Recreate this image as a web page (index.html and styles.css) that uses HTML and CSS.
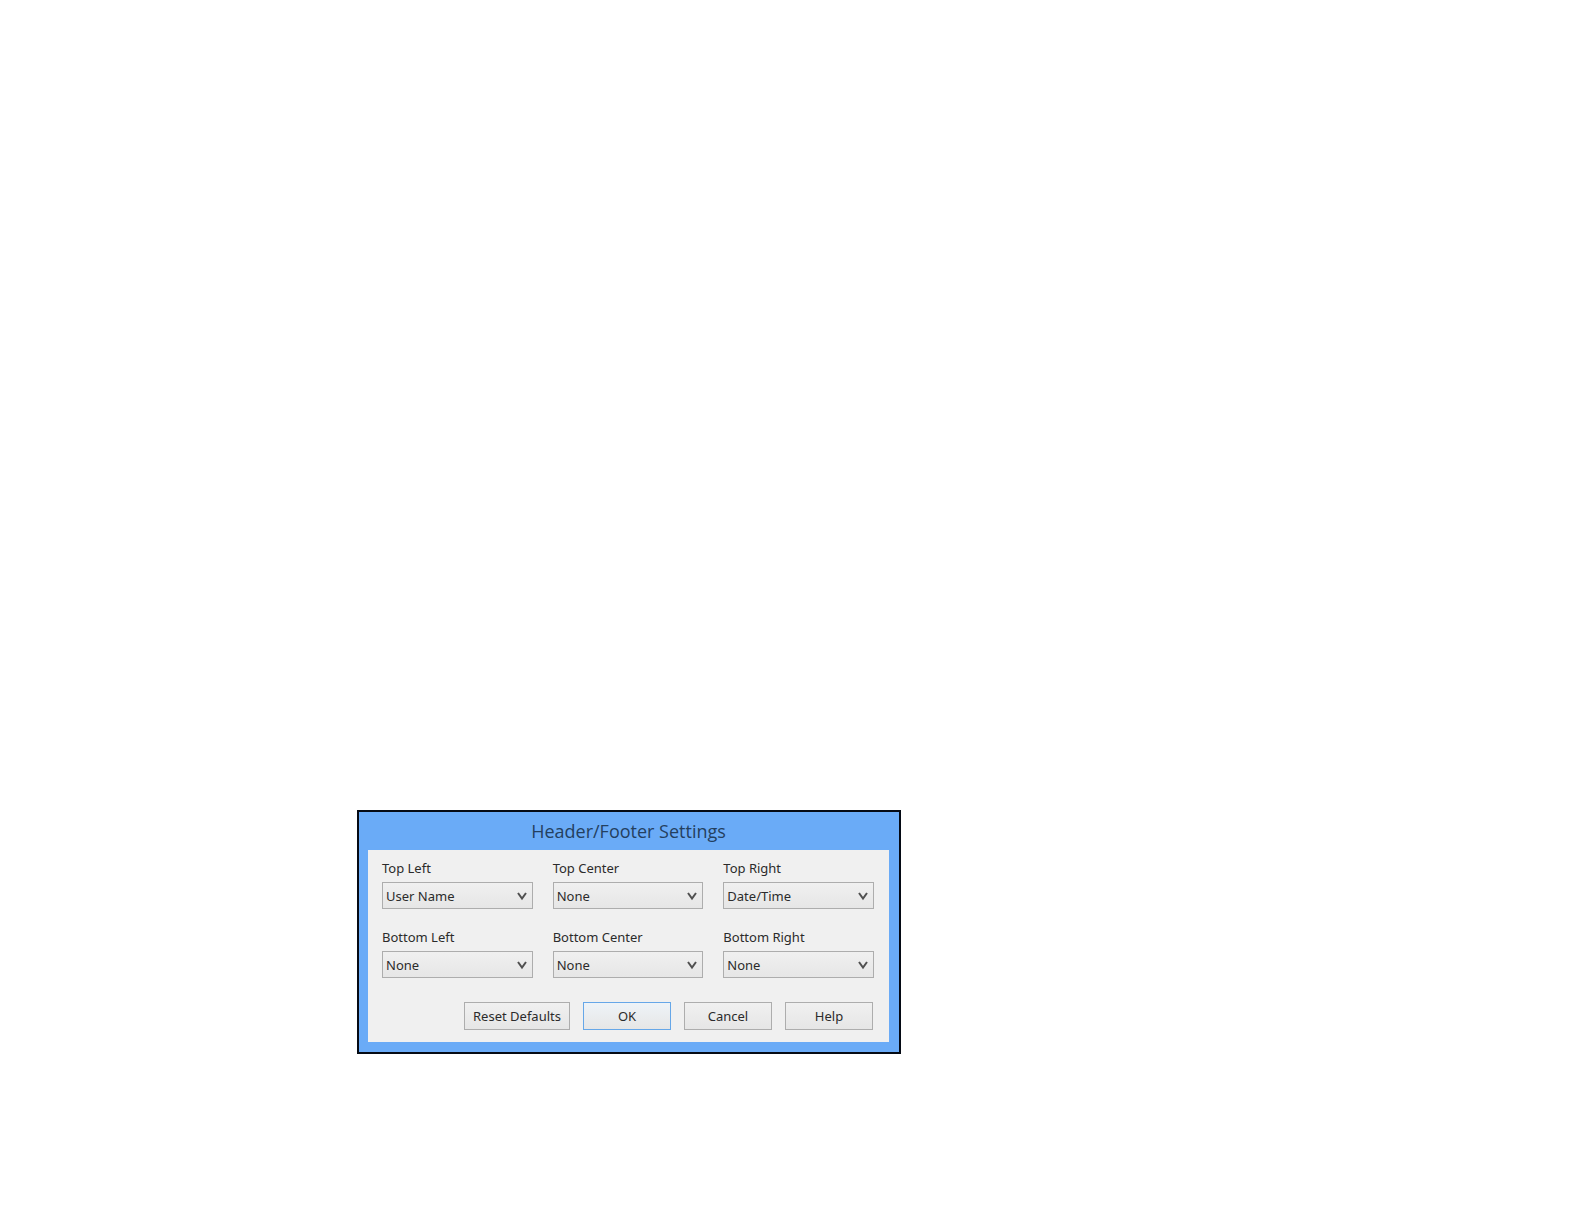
FILE: index.html
```html
<!DOCTYPE html>
<html lang="en">
<head>
    <meta charset="UTF-8">
    <meta name="viewport" content="width=device-width, initial-scale=1.0">
    <title>Header/Footer Settings</title>
    <link rel="stylesheet" href="styles.css">
</head>
<body>
    <main class="page">
        <form class="dialog">
            <h1>Header/Footer Settings</h1>
            <div class="panel">
                <div class="fields">
                    <div class="field">
                        <label for="topLeft">Top Left</label>
                        <div class="select">
                            <select id="topLeft"><option>User Name</option><option>Date/Time</option><option>None</option></select>
                            <svg viewBox="0 0 12 9"><path d="M2 1L6 6.5L10 1"/></svg>
                        </div>
                    </div>
                    <div class="field">
                        <label for="topCenter">Top Center</label>
                        <div class="select">
                            <select id="topCenter"><option>None</option><option>User Name</option><option>Date/Time</option></select>
                            <svg viewBox="0 0 12 9"><path d="M2 1L6 6.5L10 1"/></svg>
                        </div>
                    </div>
                    <div class="field">
                        <label for="topRight">Top Right</label>
                        <div class="select">
                            <select id="topRight"><option>Date/Time</option><option>User Name</option><option>None</option></select>
                            <svg viewBox="0 0 12 9"><path d="M2 1L6 6.5L10 1"/></svg>
                        </div>
                    </div>
                    <div class="field">
                        <label for="bottomLeft">Bottom Left</label>
                        <div class="select">
                            <select id="bottomLeft"><option>None</option><option>User Name</option><option>Date/Time</option></select>
                            <svg viewBox="0 0 12 9"><path d="M2 1L6 6.5L10 1"/></svg>
                        </div>
                    </div>
                    <div class="field">
                        <label for="bottomCenter">Bottom Center</label>
                        <div class="select">
                            <select id="bottomCenter"><option>None</option><option>User Name</option><option>Date/Time</option></select>
                            <svg viewBox="0 0 12 9"><path d="M2 1L6 6.5L10 1"/></svg>
                        </div>
                    </div>
                    <div class="field">
                        <label for="bottomRight">Bottom Right</label>
                        <div class="select">
                            <select id="bottomRight"><option>None</option><option>User Name</option><option>Date/Time</option></select>
                            <svg viewBox="0 0 12 9"><path d="M2 1L6 6.5L10 1"/></svg>
                        </div>
                    </div>
                </div>
                <div class="buttons">
                    <button type="reset" class="wide">Reset Defaults</button>
                    <button type="button" class="default">OK</button>
                    <button type="button">Cancel</button>
                    <button type="button">Help</button>
                </div>
            </div>
        </form>
    </main>
</body>
</html>
```
FILE: styles.css
```css
* { box-sizing: border-box; }
body { margin: 0; background: #fff; color: #2b2b2b; font: 13px/20px "Noto Sans", "Open Sans", sans-serif; }
.page { padding: 810px 20px 20px 357px; }

.dialog { max-width: 544px; padding: 0 10px 10px 9px; border: 2px solid #050a14; background: #6aabf7; }
.dialog h1 { margin: 0; color: #24405f; font-family: "Open Sans", sans-serif; font-size: 18px; font-weight: 400; line-height: 38px; text-align: center; }
.panel { padding: 8px 15px 12px 14px; background: #f0f0f0; }

.fields { display: grid; grid-template-columns: repeat(3, 1fr); gap: 18px 20px; }
.field label { display: block; margin-bottom: 4px; }
.select { position: relative; }
.select select { display: block; width: 100%; height: 27px; padding: 0 20px 0 3px; border: 1px solid #adadad; border-radius: 0; background: linear-gradient(#f0f0f0, #e6e6e6); color: inherit; font: inherit; appearance: none; }
.select svg { position: absolute; top: 10px; right: 5px; width: 12px; height: 9px; fill: none; stroke: #505050; stroke-width: 2; pointer-events: none; }

.buttons { display: flex; justify-content: flex-end; gap: 13px; margin-top: 24px; padding-right: 1px; }
.buttons button { width: 88px; height: 28px; padding: 0; border: 1px solid #adadad; background: linear-gradient(#f0f0f0, #e6e6e6); color: inherit; font: inherit; }
.buttons .wide { width: 106px; }
.buttons .default { border-color: #66a7e8; background: linear-gradient(#eef3f8, #e6e6e6); }
```
